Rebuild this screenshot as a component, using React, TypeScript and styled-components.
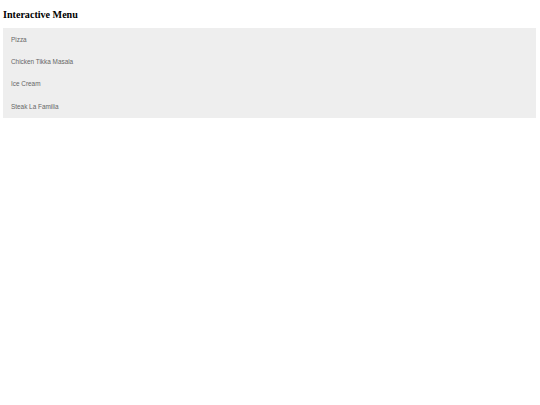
import React from "react";
import styled, { createGlobalStyle } from "styled-components";

const GlobalStyle = createGlobalStyle`
  body {
    margin: 0;
    background: #ffffff;
  }
`;

const Page = styled.div`
  padding: 7px 4px 0 3px;
`;

const Title = styled.h1`
  margin: 0 0 6px;
  font-family: "Liberation Serif", "Times New Roman", serif;
  font-size: 10.1px;
  font-weight: 700;
  color: #000;
  line-height: 15px;
`;

const Menu = styled.ul`
  list-style: none;
  margin: 0;
  padding: 0;
  background-color: #eeeeee;
  display: flex;
  flex-direction: column;
`;

const Item = styled.li`
  height: 22.4px;
  display: flex;
  align-items: center;
  padding-left: 8px;
  font-family: "Liberation Sans", Arial, sans-serif;
  font-size: 6.4px;
  color: #666666;
  cursor: pointer;
`;

const items = ["Pizza", "Chicken Tikka Masala", "Ice Cream", "Steak La Familia"];

export default function App() {
  return (
    <Page>
      <GlobalStyle />
      <Title>Interactive Menu</Title>
      <Menu>
        {items.map((name) => (
          <Item key={name}>{name}</Item>
        ))}
      </Menu>
    </Page>
  );
}
